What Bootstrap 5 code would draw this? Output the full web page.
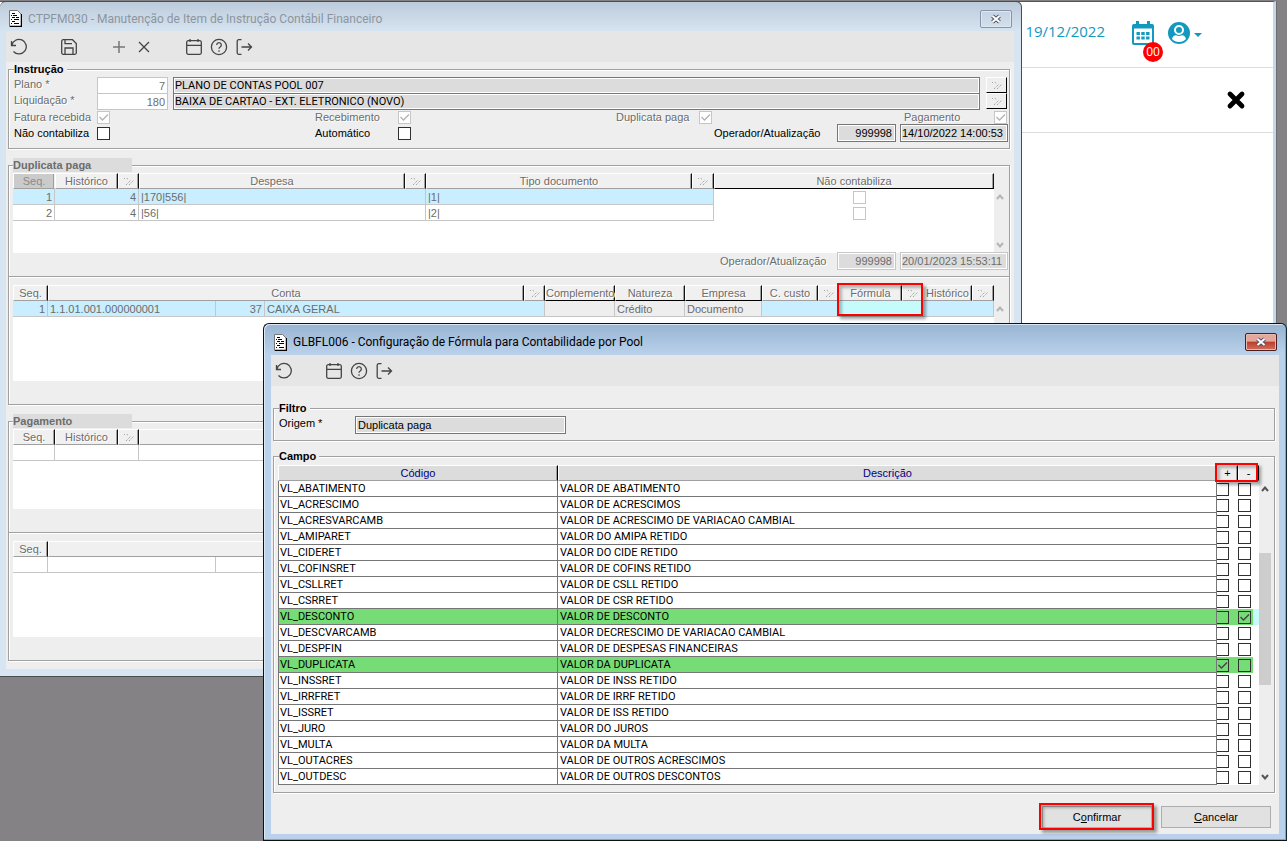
<!DOCTYPE html>
<html lang="pt-BR">
<head>
<meta charset="utf-8">
<meta name="viewport" content="width=device-width, initial-scale=1">
<title>GLBFL006 - Configuração de Fórmula para Contabilidade por Pool</title>
<link href="https://cdn.jsdelivr.net/npm/bootstrap@5.3.0/dist/css/bootstrap.min.css" rel="stylesheet">
<style>
:root { --ink: #6c6c6c; --face: #eee; --well: #dcdcdc; --edge: #767676; --soft: #c6c6c6; --sel: #c8eeff; --teal: #1199bf; }
body { background: #848284; font: 11px/15px "Liberation Sans", Arial, sans-serif; color: #000; }
.desktop { position: relative; min-height: 100vh; overflow: hidden; border-top: 1px solid #848284; }

/* browser page behind the windows */
.site { position: absolute; top: 0; left: 0; right: 11px; min-height: 50vh; background: #fff; border-top: 1px solid #555; border-right: 3px solid #c8d6ea; outline: 1px solid #6e6e72; }
.site-bar { height: 66px; border-bottom: 1px solid #ddd; color: var(--teal); font: 15px/20px "Open Sans", sans-serif; padding: 19px 71px 0 0; }
.site-cal { margin: 0 14px 0 27px; }
.site-user { margin-top: 1px; }
.site-sub { height: 65px; border-bottom: 1px solid #ddd; padding-right: 27px; }
.bell-count { position: absolute; left: 11px; top: 21px; width: 20px; height: 20px; border-radius: 50%; background: #f00; color: #fff; font: 12px/19px "Open Sans", sans-serif; text-align: center; }
.site button, .tool, .pick, .win-x { border: 0; background: none; padding: 0; }

/* window frame */
.win { position: absolute; border-radius: 6px 6px 0 0; }
.win-back { top: 0; left: 0; right: 265px; padding: 0 7px 7px 6px; background: linear-gradient(#bccbdb, #d7e4f1 30px); border: 1px solid #4c4c4c; border-width: 1px 1px 1px 0; }
.win-front { top: 322px; left: 263px; right: 0; padding: 0 7px 6px; background: linear-gradient(#98b4d2, #b9d1ea 30px); border: 1px solid #111; border-right-color: #0c2a33; box-shadow: inset -1px -1px 0 #3cc4dc, inset 1px 1px 0 #dbe8f5; }
.win-title { height: 29px; font: 12px/18px Roboto, "Open Sans", sans-serif; padding: 4px 2px 0 3px; }
.win-front .win-title { height: 31px; padding-top: 5px; }
.win-back .win-title { color: #8c959e; }
.win-name { margin-left: 6px; }
.win-x { width: 32px; height: 18px; border: 1px solid #8594a8; border-radius: 2px; box-shadow: inset 0 0 0 1px #dfe8f2; line-height: 0; }
.win-front .win-x { border-color: #4a1d20; background: linear-gradient(#e3a79c 45%, #bd3c2a 50%, #d0705e); box-shadow: inset 0 0 0 1px #eab9ae; }
.tools { height: 31px; background: #e6e6e6; }
.tool { width: 25px; height: 31px; color: #444; line-height: 0; }
.tool svg { width: 18px; height: 18px; fill: none; stroke: currentColor; stroke-width: 1.3; }
.win-body { background: var(--face); padding: 0 4px 8px 2px; }
.win-front .win-body { padding: 15px 4px 6px 2px; }

/* etched groups */
.group { border: 1px solid #a0a0a0; box-shadow: inset 1px 1px 0 #fff, 1px 1px 0 #fff; padding: 0 0 7px 4px; margin-bottom: 9px; }
.win-front .group { padding-bottom: 6px; margin-bottom: 8px; }
.win-front .group-list { padding-top: 1px; padding-bottom: 7px; }
.group > legend { float: none; width: auto; margin: 0 0 0 1px; padding: 0 3px 0 0; font-size: 11px; font-weight: bold; line-height: 15px; background: var(--face); }
.group-off { padding: 1px 0 7px 4px; }
.group > .legend-off { width: 119px; margin-left: 0; height: 14px; background: var(--well); color: var(--ink); }
.cut { height: 2px; margin: 7px 0 7px -4px; background: #a0a0a0; border-bottom: 1px solid #fff; }
.cut-low { margin-top: 23px; }
.spare { height: 16px; }

.off { color: var(--ink); text-shadow: 1px 1px 0 #fff; }
.ln { height: 16px; padding: 0 2px 0 1px; }
.ln-end { padding-right: 1px; }
.w-lab { width: 83px; } .w-slot { width: 218px; } .w-op { width: 123px; } .w-op2 { width: 117px; } .w-pg { width: 90px; } .w-org { width: 76px; margin-left: 1px; }
.box { height: 17px; min-width: 0; font: 11px/13px "Liberation Sans", Arial, sans-serif; border: 1px solid var(--edge); border-radius: 0; background: var(--well); box-shadow: inset 0 0 0 1px #fff; padding: 0 2px; color: #000; }
.box-num { width: 71px; text-align: right; border-color: var(--soft); background: #fff; color: var(--ink); }
.box-name { margin: 0 6px 0 5px; padding: 0 1px; font-family: Roboto, Arial, sans-serif; }
.box-op { width: 59px; height: 18px; text-align: right; padding-right: 3px; }
.box-dt { width: 108px; height: 18px; padding: 0 1px; }
.box-dim { border-color: var(--soft); color: var(--ink); }
.box-src { width: 211px; height: 18px; }
.pick { width: 21px; height: 16px; background: var(--face); border: 1px solid #fff; border-right-color: #000; border-bottom-color: #000; line-height: 0; }
.tick { appearance: none; display: block; flex: none; width: 13px; height: 13px; margin: 0; border: 1px solid #303030; background: #fff center / 11px 11px no-repeat; }
.tick:checked { background-image: url("data:image/svg+xml,%3Csvg xmlns='http://www.w3.org/2000/svg' viewBox='0 0 11 11'%3E%3Cpath d='M1.5 5l3 3L10 2.500' fill='none' stroke='%23444' stroke-width='1.4'/%3E%3C/svg%3E"); }
.tick-dim { border-color: var(--soft); }
.tick-dim:checked { background-image: url("data:image/svg+xml,%3Csvg xmlns='http://www.w3.org/2000/svg' viewBox='0 0 11 11'%3E%3Cpath d='M1.5 5l3 3L10 2.500' fill='none' stroke='%23b4b4b4' stroke-width='1.4'/%3E%3C/svg%3E"); }

/* data grids */
.sheet { min-width: 0; min-height: 80px; background: linear-gradient(var(--face) 16px, #fff 16px); }
.sheet-tall { min-height: 96px; }
.grid { width: 100%; table-layout: fixed; border-collapse: separate; border-spacing: 0; color: var(--ink); }
.grid th, .grid td { height: 16px; padding: 0 2px; white-space: nowrap; line-height: 14px; }
.grid th { position: relative; font-weight: normal; text-align: center; padding: 0; background: #f0f0f0; border-top: 1px solid #fff; border-left: 1px solid #fff; border-bottom: 1px solid #a0a0a0; border-right: 1px solid #111; text-shadow: 1px 1px 0 #fff; box-shadow: inset -1px 0 0 #a0a0a0; }
.grid th.under { border-bottom-color: #000; }
.grid th.cur { background: #cbcbcb; color: #8c8c8c; border-right-color: #eee; text-shadow: none; }
.grid td { border-right: 1px solid var(--soft); border-bottom: 1px solid var(--soft); }
.grid tr.on td { background-color: var(--sel); }
.grid tr td.ro { background-color: var(--face); }
.grid tr td.free { border: 0; background: none; padding-left: 12px; }
.grid tr td.hot { background-color: #c6fbfd; }
.num { text-align: right; }
.rail { width: 15px; padding: 21px 4px 5px 0; background: var(--face); color: #b4b4b4; }
.mark-red { position: absolute; z-index: 2; border: 2px solid #f00; box-shadow: 3px 3px 3px rgba(0,0,0,.35), inset 3px 3px 3px rgba(0,0,0,.25); pointer-events: none; }
.mark-formula { left: -3px; top: -3px; width: 86px; height: 33px; }
.mark-signs { left: -3px; top: -3px; width: 43px; height: 19px; }
.mark-ok { left: -4px; top: -4px; right: -3px; bottom: -3px; }

/* field list */
.list { color: #000; }
.list th { background: var(--well); color: #000080; text-shadow: none; border-right-color: #000; }
.list th.sign { background: var(--face); color: #000; border-bottom-color: var(--face); }
.list td { border-color: var(--edge); background: #fff; font-family: Roboto, Arial, sans-serif; padding: 1px 2px 0; }
.list td.code { border-left: 1px solid var(--edge); padding-left: 1px; }
.list td.opt { border: 0; padding: 0; }
.list tr.hit td { background: #76dc76; }
.list tr.hit td.minus { background: linear-gradient(90deg, #76dc76 15px, #fff 15px); }
.list tr.focus td.minus { background: linear-gradient(90deg, #76dc76 15px, #c6fbfd 15px); }
.list tr.hit .tick { background-color: transparent; }
.list td.plus .tick { border-left: 0; width: 12px; }
.list-box { padding-right: 3px; }
.list-rail { width: 12px; padding: 21px 0 5px; background: var(--face); color: #555; }
.thumb { height: 132px; margin-top: 61px; background: #cdcdcd; }
.acts { gap: 9px; padding: 5px 4px 0 0; }
.act { width: 110px; height: 22px; position: relative; border: 1px solid #adadad; background: #e1e1e1; font: inherit; color: #000; padding: 0; }
</style>
</head>
<body>
<svg width="0" height="0" class="position-absolute" aria-hidden="true">
  <symbol id="i-doc" viewBox="0 0 13 17"><path d="M.5.5h8l4 4v12H.5z" fill="#fff" stroke="#777"/><path d="M12.500 4v12.500H1" fill="none" stroke="#000" stroke-width="1.500"/><path d="M3 3.500h3M2 5.500h1M4 5.500h4M3 7.500h3M7 7.500h3M2 9.500h1M5 9.500h5M3 11.500h3M2 13.500h1M5 13.500h5" stroke="#000" stroke-width="1.200"/></symbol>
  <symbol id="i-undo" viewBox="0 0 18 18"><path d="M1.500 3v4.500H6M1.800 7.300A7.300 7.300 0 1 1 3.500 13.500"/></symbol>
  <symbol id="i-save" viewBox="0 0 18 18"><path d="M1.700 3.200A1.500 1.500 0 0 1 3.200 1.700h9.300l3.800 3.800v9.300a1.500 1.500 0 0 1-1.500 1.500H3.200a1.500 1.500 0 0 1-1.500-1.500zM5 1.700v4h7M5 16v-6h8v6"/></symbol>
  <symbol id="i-plus" viewBox="0 0 18 18"><path d="M9 3v12M3 9h12" stroke="#777" stroke-width="1.500"/></symbol>
  <symbol id="i-del" viewBox="0 0 18 18"><path d="M4 4l10 10M14 4L4 14"/></symbol>
  <symbol id="i-cal" viewBox="0 0 18 18"><path d="M3.200 2.700h11.600a1.500 1.500 0 0 1 1.500 1.500v10.600a1.500 1.500 0 0 1-1.500 1.500H3.200a1.500 1.500 0 0 1-1.500-1.500V4.200a1.500 1.500 0 0 1 1.500-1.500zM1.700 7.300h14.600M5 1v3M13 1v3"/></symbol>
  <symbol id="i-help" viewBox="0 0 18 18"><circle cx="9" cy="9" r="7.600"/><path d="M6.700 7a2.300 2.300 0 1 1 3.500 2c-.9.500-1.200.9-1.200 1.700M9 12.300v1.400"/></symbol>
  <symbol id="i-exit" viewBox="0 0 18 18"><path d="M6.500 1.700H3.700a1.500 1.500 0 0 0-1.500 1.500v11.600a1.500 1.500 0 0 0 1.500 1.500h2.800M6.500 9h10M13 5.500L16.500 9 13 12.500"/></symbol>
  <symbol id="i-x" viewBox="0 0 12 10"><path d="M2.500 2l7 6M9.500 2l-7 6" stroke="#4d5566" stroke-width="4"/><path d="M2.500 2l7 6M9.500 2l-7 6" stroke="#fff" stroke-width="2"/></symbol>
  <symbol id="i-pick" viewBox="0 0 12 9"><path d="M1 1.500h1M4 1l1 2M3 8l5-5M6 8l5-5" stroke="#a8a8a8" stroke-dasharray="1.400 .8" fill="none"/></symbol>
  <symbol id="i-up" viewBox="0 0 8 6"><path d="M1 5l3-3.500L7 5" fill="none" stroke="currentColor" stroke-width="2"/></symbol>
  <symbol id="i-down" viewBox="0 0 8 6"><path d="M1 1l3 3.500L7 1" fill="none" stroke="currentColor" stroke-width="2"/></symbol>
</svg>

<main class="desktop">
  <section class="site">
    <div class="site-bar d-flex justify-content-end align-items-start">
      <span>19/12/2022</span>
      <div class="position-relative site-cal">
        <svg width="22" height="24" viewBox="0 0 22 24"><path d="M5.500 0v4M16.500 0v4" stroke="#1199bf" stroke-width="3"/><rect x="1" y="4" width="20" height="19" rx="1" fill="none" stroke="#1199bf" stroke-width="2"/><path d="M1 3.500h20v4H1z" fill="#1199bf"/><path d="M4.500 12.500h13M4.500 17h13" stroke="#1199bf" stroke-width="3" stroke-dasharray="3.400 1.400"/></svg>
        <span class="bell-count">00</span>
      </div>
      <button class="site-user d-flex align-items-center" aria-label="Usuário">
        <svg width="22" height="22" viewBox="0 0 22 22"><circle cx="11" cy="11" r="11" fill="#1199bf"/><circle cx="11" cy="8" r="4" fill="none" stroke="#fff" stroke-width="2"/><path d="M4 17c.500-2.500 2-3.500 4-3.800 2 1 4 1 6 0 2 .3 3.500 1.300 4 3.800-1.800 2-4 3-7 3s-5.200-1-7-3z" fill="#fff"/></svg>
        <svg width="8" height="4" viewBox="0 0 8 4" class="ms-1 mt-1"><path d="M0 0h8L4 4z" fill="#1199bf"/></svg>
      </button>
    </div>
    <div class="site-sub d-flex justify-content-end align-items-center">
      <button aria-label="Fechar"><svg width="20" height="20" viewBox="0 0 20 20"><path d="M4 4l12 12M16 4L4 16" stroke="#000" stroke-width="4.800" stroke-linecap="round"/></svg></button>
    </div>
  </section>

  <section class="win win-back">
    <header class="win-title d-flex align-items-center">
      <svg width="13" height="17"><use href="#i-doc"/></svg>
      <span class="win-name flex-grow-1">CTPFM030 - Manutenção de Item de Instrução Contábil Financeiro</span>
      <button class="win-x" aria-label="Fechar"><svg width="12" height="10"><use href="#i-x"/></svg></button>
    </header>
    <div class="tools d-flex">
      <button class="tool" aria-label="Desfazer"><svg><use href="#i-undo"/></svg></button><span class="tool"></span>
      <button class="tool" aria-label="Salvar"><svg><use href="#i-save"/></svg></button><span class="tool"></span>
      <button class="tool" aria-label="Incluir"><svg><use href="#i-plus"/></svg></button>
      <button class="tool" aria-label="Excluir"><svg><use href="#i-del"/></svg></button><span class="tool"></span>
      <button class="tool" aria-label="Calendário"><svg><use href="#i-cal"/></svg></button>
      <button class="tool" aria-label="Ajuda"><svg><use href="#i-help"/></svg></button>
      <button class="tool" aria-label="Sair"><svg><use href="#i-exit"/></svg></button>
    </div>
    <div class="win-body">
      <fieldset class="group">
        <legend>Instrução</legend>
        <div class="ln d-flex">
          <label class="off w-lab" for="plano">Plano *</label>
          <input id="plano" class="box box-num" value="7">
          <input class="box box-name flex-grow-1" aria-label="Descrição do plano" readonly value="PLANO DE CONTAS POOL 007">
          <button class="pick" aria-label="Buscar plano"><svg width="12" height="9"><use href="#i-pick"/></svg></button>
        </div>
        <div class="ln d-flex">
          <label class="off w-lab" for="liq">Liquidação *</label>
          <input id="liq" class="box box-num" value="180">
          <input class="box box-name flex-grow-1" aria-label="Descrição da liquidação" readonly value="BAIXA DE CARTAO - EXT. ELETRONICO (NOVO)">
          <button class="pick" aria-label="Buscar liquidação"><svg width="12" height="9"><use href="#i-pick"/></svg></button>
        </div>
        <div class="ln d-flex align-items-center off">
          <label class="w-lab" for="c1">Fatura recebida</label><div class="w-slot"><input id="c1" type="checkbox" class="tick tick-dim" checked></div>
          <label class="w-lab" for="c2">Recebimento</label><div class="w-slot"><input id="c2" type="checkbox" class="tick tick-dim" checked></div>
          <label class="w-lab" for="c3">Duplicata paga</label><input id="c3" type="checkbox" class="tick tick-dim" checked>
          <label class="w-pg ms-auto" for="c4">Pagamento</label><input id="c4" type="checkbox" class="tick tick-dim" checked>
        </div>
        <div class="ln ln-end d-flex align-items-center">
          <label class="w-lab" for="c5">Não contabiliza</label><div class="w-slot"><input id="c5" type="checkbox" class="tick"></div>
          <label class="w-lab" for="c6">Automático</label><input id="c6" type="checkbox" class="tick">
          <label class="w-op ms-auto" for="op1">Operador/Atualização</label>
          <input id="op1" class="box box-op me-1" readonly value="999998">
          <input class="box box-dt" aria-label="Data de atualização" readonly value="14/10/2022 14:00:53">
        </div>
      </fieldset>

      <fieldset class="group group-off">
        <legend class="legend-off">Duplicata paga</legend>
        <div class="d-flex">
          <div class="sheet flex-grow-1">
            <table class="grid">
              <colgroup><col style="width:42px"><col style="width:63px"><col style="width:21px"><col style="width:266px"><col style="width:21px"><col style="width:266px"><col style="width:22px"><col></colgroup>
              <thead><tr><th class="cur">Seq.</th><th>Histórico</th><th class="p"></th><th>Despesa</th><th class="p"></th><th>Tipo documento</th><th class="p"></th><th class="under">Não contabiliza</th></tr></thead>
              <tbody>
                <tr class="on"><td class="num">1</td><td class="num" colspan="2">4</td><td colspan="2">|170|556|</td><td colspan="2">|1|</td><td class="free"><input type="checkbox" class="tick tick-dim mx-auto" aria-label="Não contabiliza 1"></td></tr>
                <tr><td class="num">2</td><td class="num" colspan="2">4</td><td colspan="2">|56|</td><td colspan="2">|2|</td><td class="free"><input type="checkbox" class="tick tick-dim mx-auto" aria-label="Não contabiliza 2"></td></tr>
              </tbody>
            </table>
          </div>
          <div class="rail flex-shrink-0 d-flex flex-column justify-content-between align-items-center"><svg width="8" height="6"><use href="#i-up"/></svg><svg width="8" height="6"><use href="#i-down"/></svg></div>
        </div>
        <div class="ln ln-end d-flex justify-content-end align-items-center off">
          <label class="w-op2" for="op2">Operador/Atualização</label>
          <input id="op2" class="box box-op box-dim me-1" readonly value="999998">
          <input class="box box-dt box-dim" aria-label="Data de atualização da duplicata" readonly value="20/01/2023 15:53:11">
        </div>
        <div class="cut"></div>
        <div class="d-flex">
          <div class="sheet sheet-tall flex-grow-1">
            <table class="grid">
              <colgroup><col style="width:35px"><col style="width:168px"><col style="width:49px"><col><col style="width:21px"><col style="width:70px"><col style="width:70px"><col style="width:77px"><col style="width:56px"><col style="width:21px"><col style="width:63px"><col style="width:21px"><col style="width:49px"><col style="width:22px"></colgroup>
              <thead><tr><th>Seq.</th><th colspan="3">Conta</th><th class="p"></th><th class="under">Complemento</th><th class="under">Natureza</th><th class="under">Empresa</th><th>C. custo</th><th class="p"></th><th>Fórmula<span class="mark-red mark-formula"></span></th><th class="p"></th><th>Histórico</th><th class="p"></th></tr></thead>
              <tbody><tr class="on"><td class="num">1</td><td>1.1.01.001.000000001</td><td class="num">37</td><td colspan="2">CAIXA GERAL</td><td class="ro"></td><td class="ro">Crédito</td><td class="ro">Documento</td><td colspan="2"></td><td class="hot" colspan="2"></td><td colspan="2"></td></tr></tbody>
            </table>
          </div>
          <div class="rail flex-shrink-0 d-flex flex-column align-items-center"><svg width="8" height="6"><use href="#i-up"/></svg></div>
        </div>
        <div class="spare"></div>
      </fieldset>

      <fieldset class="group group-off mb-0">
        <legend class="legend-off">Pagamento</legend>
        <div class="sheet me-3">
          <table class="grid">
            <colgroup><col style="width:42px"><col style="width:63px"><col style="width:21px"><col></colgroup>
            <thead><tr><th>Seq.</th><th>Histórico</th><th class="p"></th><th></th></tr></thead>
            <tbody><tr><td></td><td colspan="2"></td><td></td></tr></tbody>
          </table>
        </div>
        <div class="cut cut-low"></div>
        <div class="sheet sheet-tall me-3">
          <table class="grid">
            <colgroup><col style="width:35px"><col style="width:168px"><col></colgroup>
            <thead><tr><th>Seq.</th><th colspan="2"></th></tr></thead>
            <tbody><tr><td></td><td></td><td></td></tr></tbody>
          </table>
        </div>
        <div class="spare"></div>
      </fieldset>
    </div>
  </section>

  <section class="win win-front">
    <header class="win-title d-flex align-items-center">
      <svg width="13" height="17"><use href="#i-doc"/></svg>
      <span class="win-name flex-grow-1">GLBFL006 - Configuração de Fórmula para Contabilidade por Pool</span>
      <button class="win-x" aria-label="Fechar"><svg width="12" height="10"><use href="#i-x"/></svg></button>
    </header>
    <div class="tools d-flex">
      <button class="tool" aria-label="Desfazer"><svg><use href="#i-undo"/></svg></button><span class="tool"></span>
      <button class="tool" aria-label="Calendário"><svg><use href="#i-cal"/></svg></button>
      <button class="tool" aria-label="Ajuda"><svg><use href="#i-help"/></svg></button>
      <button class="tool" aria-label="Sair"><svg><use href="#i-exit"/></svg></button>
    </div>
    <div class="win-body">
      <fieldset class="group">
        <legend>Filtro</legend>
        <div class="d-flex">
          <label for="origem" class="w-org">Origem *</label>
          <input id="origem" class="box box-src" readonly value="Duplicata paga">
        </div>
      </fieldset>
      <fieldset class="group group-list">
        <legend>Campo</legend>
        <div class="list-box d-flex">
          <table class="grid list">
            <colgroup><col style="width:280px"><col><col style="width:21px"><col style="width:21px"></colgroup>
            <thead><tr><th>Código</th><th>Descrição</th><th class="sign">+<span class="mark-red mark-signs"></span></th><th class="sign">-</th></tr></thead>
            <tbody id="fields"></tbody>
          </table>
          <div class="list-rail flex-shrink-0 d-flex flex-column align-items-center">
            <svg width="8" height="6"><use href="#i-up"/></svg><div class="thumb w-100"></div><svg class="mt-auto" width="8" height="6"><use href="#i-down"/></svg>
          </div>
        </div>
      </fieldset>
      <div class="acts d-flex justify-content-end">
        <button class="act">C<u>o</u>nfirmar<span class="mark-red mark-ok"></span></button>
        <button class="act"><u>C</u>ancelar</button>
      </div>
    </div>
  </section>
</main>

<script>
const fields = [
  ["VL_ABATIMENTO", "VALOR DE ABATIMENTO"], ["VL_ACRESCIMO", "VALOR DE ACRESCIMOS"],
  ["VL_ACRESVARCAMB", "VALOR DE ACRESCIMO DE VARIACAO CAMBIAL"], ["VL_AMIPARET", "VALOR DO AMIPA RETIDO"],
  ["VL_CIDERET", "VALOR DO CIDE RETIDO"], ["VL_COFINSRET", "VALOR DE COFINS RETIDO"],
  ["VL_CSLLRET", "VALOR DE CSLL RETIDO"], ["VL_CSRRET", "VALOR DE CSR RETIDO"],
  ["VL_DESCONTO", "VALOR DE DESCONTO", "-"], ["VL_DESCVARCAMB", "VALOR DECRESCIMO DE VARIACAO CAMBIAL"],
  ["VL_DESPFIN", "VALOR DE DESPESAS FINANCEIRAS"], ["VL_DUPLICATA", "VALOR DA DUPLICATA", "+"],
  ["VL_INSSRET", "VALOR DE INSS RETIDO"], ["VL_IRRFRET", "VALOR DE IRRF RETIDO"],
  ["VL_ISSRET", "VALOR DE ISS RETIDO"], ["VL_JURO", "VALOR DO JUROS"], ["VL_MULTA", "VALOR DA MULTA"],
  ["VL_OUTACRES", "VALOR DE OUTROS ACRESCIMOS"], ["VL_OUTDESC", "VALOR DE OUTROS DESCONTOS"]
];
document.getElementById("fields").innerHTML = fields.map(([code, text, sign]) =>
  `<tr class="${sign ? "hit" : ""} ${sign === "-" ? "focus" : ""}"><td class="code">${code}</td><td>${text}</td>` +
  `<td class="opt plus"><input type="checkbox" class="tick" aria-label="${code} +" ${sign === "+" ? "checked" : ""}></td>` +
  `<td class="opt minus"><input type="checkbox" class="tick" aria-label="${code} -" ${sign === "-" ? "checked" : ""}></td></tr>`).join("");
document.querySelectorAll("th.p").forEach(th => {
  th.innerHTML = '<svg width="12" height="9" class="d-block mx-auto" role="img" aria-label="Buscar"><use href="#i-pick"/></svg>';
});
</script>
<script src="https://cdn.jsdelivr.net/npm/bootstrap@5.3.0/dist/js/bootstrap.bundle.min.js"></script>
</body>
</html>
